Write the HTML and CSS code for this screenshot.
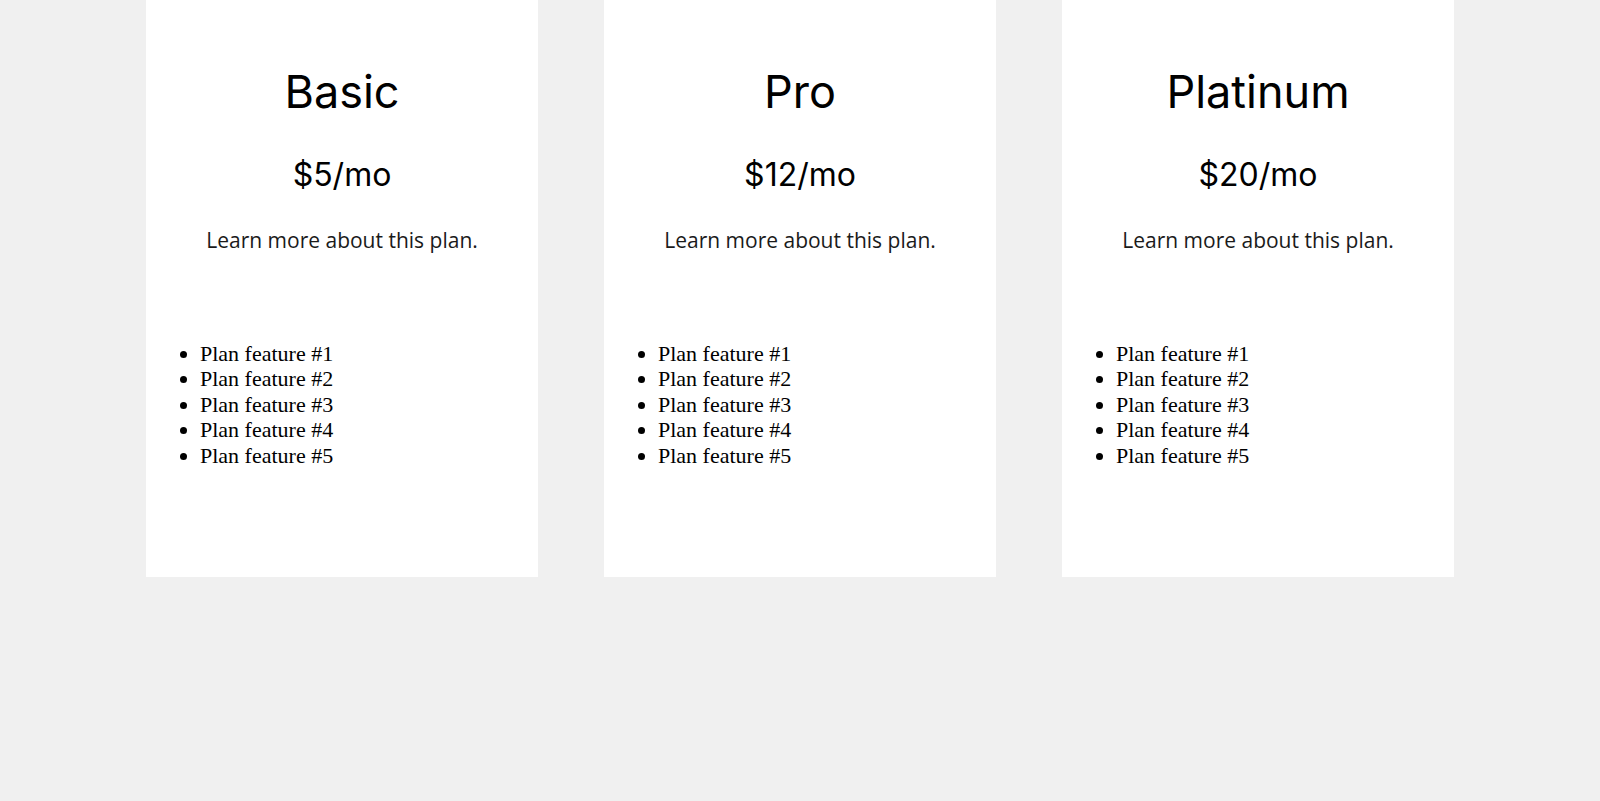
FILE: index.html
```html
<!DOCTYPE html>
<html>
<head>
<meta charset="utf-8">
<title>Pricing</title>
<link rel="stylesheet" href="styles.css">
</head>
<body>
<main class="plans">
  <section class="plan">
    <h2 class="plan-name">Basic</h2>
    <p class="plan-price">$5/mo</p>
    <p class="plan-desc">Learn more about this plan.</p>
    <ul class="plan-features">
      <li>Plan feature #1</li>
      <li>Plan feature #2</li>
      <li>Plan feature #3</li>
      <li>Plan feature #4</li>
      <li>Plan feature #5</li>
    </ul>
  </section>
  <section class="plan">
    <h2 class="plan-name">Pro</h2>
    <p class="plan-price">$12/mo</p>
    <p class="plan-desc">Learn more about this plan.</p>
    <ul class="plan-features">
      <li>Plan feature #1</li>
      <li>Plan feature #2</li>
      <li>Plan feature #3</li>
      <li>Plan feature #4</li>
      <li>Plan feature #5</li>
    </ul>
  </section>
  <section class="plan">
    <h2 class="plan-name">Platinum</h2>
    <p class="plan-price">$20/mo</p>
    <p class="plan-desc">Learn more about this plan.</p>
    <ul class="plan-features">
      <li>Plan feature #1</li>
      <li>Plan feature #2</li>
      <li>Plan feature #3</li>
      <li>Plan feature #4</li>
      <li>Plan feature #5</li>
    </ul>
  </section>
</main>
</body>
</html>
```
FILE: styles.css
```css
html, body {
  margin: 0;
  padding: 0;
  background: #f0f0f0;
}

.plans {
  display: flex;
  justify-content: center;
  gap: 66px;
}

.plan {
  width: 392px;
  background: #ffffff;
  text-align: center;
  padding: 65px 0 109px;
  box-sizing: border-box;
}

.plan-name {
  margin: 0;
  font-family: "Inter", "Open Sans", sans-serif;
  font-weight: 400;
  font-size: 45px;
  line-height: 54px;
  color: #000;
}

.plan-price {
  margin: 36px 0 0;
  font-family: "Inter", "Open Sans", sans-serif;
  font-size: 32px;
  line-height: 40px;
  color: #000;
}

.plan-desc {
  margin: 31px 0 0;
  font-family: "Open Sans", sans-serif;
  font-size: 21px;
  line-height: 28px;
  color: #1a1a1a;
}

.plan-features {
  margin: 87px 0 0;
  padding: 0 0 0 54px;
  text-align: left;
  font-family: "Liberation Serif", serif;
  font-size: 22px;
  line-height: 25.4px;
  color: #000;
}
```
